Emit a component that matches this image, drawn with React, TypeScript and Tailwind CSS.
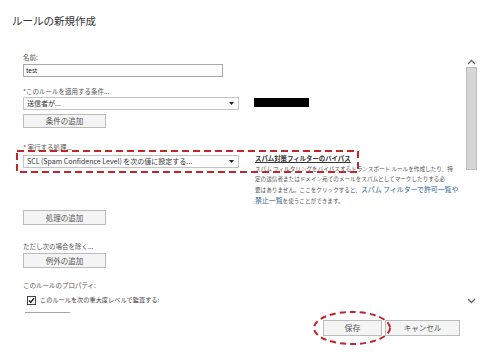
import React from "react";

function Select({ text }: { text: string }) {
  return (
    <div className="flex items-center w-[216px] h-[13px] border border-[#c4c4c4] bg-white pl-[3px] pr-[4px] shrink-0">
      <span className="flex-1 text-[7px] leading-[11px] text-[#333] whitespace-nowrap overflow-hidden">{text}</span>
      {/* arrow */}
      <svg width="5" height="3" viewBox="0 0 5 3" className="shrink-0">
        <path d="M0 0h5L2.5 3z" fill="#222" />
      </svg>
    </div>
  );
}

function Btn({ label, className = "" }: { label: string; className?: string }) {
  return (
    <button
      className={`flex items-center justify-center border border-[#bcbcbc] bg-[#f4f4f4] text-[7.5px] leading-none text-[#555] ${className}`}
    >
      {label}
    </button>
  );
}

function Label({ text, className = "" }: { text: string; className?: string }) {
  return <div className={`h-[10px] text-[6.5px] leading-[10px] text-[#555] whitespace-nowrap ${className}`}>{text}</div>;
}

function Caret({ up }: { up?: boolean }) {
  return (
    <svg width="9" height="6" viewBox="0 0 9 6">
      <path d={up ? "M1 5l3.5-3.5L8 5" : "M1 1l3.5 3.5L8 1"} fill="none" stroke="#666" strokeWidth="1.3" />
    </svg>
  );
}

export default function App() {
  return (
    <div className="relative w-[480px] h-[356px] overflow-hidden bg-white font-['Noto_Sans_CJK_JP','Noto_Sans',sans-serif] text-[#333]">
      {/* Title */}
      <div className="h-[50px] pt-[14px] pl-[12px] text-[10.5px] leading-[14px] text-[#333]">ルールの新規作成</div>

      {/* Body */}
      <div className="flex h-[270px]">
        <div className="flex-1 flex flex-col pl-[23px] pt-[2px]">
          <Label text="名前:" />
          <div className="mt-[2px] w-[200px] h-[13px] border border-[#a9a9a9] pl-[2px] text-[6.5px] leading-[11px] text-[#222]">test</div>

          <Label text="*このルールを適用する条件..." className="mt-[9px]" />
          <div className="mt-[1px] flex items-start">
            <Select text="送信者が..." />
            <div className="ml-[15px] mt-[1px] w-[55px] h-[9px] bg-black" />
          </div>
          <Btn label="条件の追加" className="mt-[4px] w-[83px] h-[14px]" />

          <Label text="* 実行する処理..." className="mt-[14px]" />
          <div className="flex items-start">
            <div className="mt-[3px]">
              <Select text="SCL (Spam Confidence Level) を次の値に設定する..." />
            </div>
            <div className="ml-[16px] mt-[2px] text-[5.6px] leading-[10px] text-[#555] whitespace-nowrap">
              <div className="underline text-[6.4px] font-bold text-[#333]">スパム対策フィルターのバイパス</div>
              <div>スパム フィルタリングをバイパスするトランスポート ルールを作成したり、特</div>
              <div>定の送信者またはドメイン宛てのメールをスパムとしてマークしたりする必</div>
              <div>
                要はありません。ここをクリックすると、
                <span className="text-[6.9px] text-[#2a5f8f]">スパム フィルターで許可一覧や</span>
              </div>
              <div>
                <span className="text-[6.9px] text-[#2a5f8f]">禁止一覧</span>を使うことができます。
              </div>
            </div>
          </div>
          <Btn label="処理の追加" className="mt-[4px] w-[83px] h-[15px]" />

          <Label text="ただし次の場合を除く..." className="mt-[16px]" />
          <Btn label="例外の追加" className="mt-[2px] w-[83px] h-[15px]" />

          <Label text="このルールのプロパティ:" className="mt-[12px]" />
          <div className="mt-[5px] ml-[4px] flex items-center h-[10px]">
            <svg width="9" height="9" viewBox="0 0 9 9">
              <rect x="0.5" y="0.5" width="8" height="8" fill="#fff" stroke="#444" />
              <path d="M2 4.5l1.8 2L7 2.2" fill="none" stroke="#111" strokeWidth="1.4" />
            </svg>
            <span className="ml-[4px] text-[6.2px] leading-[10px] text-[#444] whitespace-nowrap">
              このルールを次の重大度レベルで監査する:
            </span>
          </div>
          <div className="mt-[7px] ml-[2px] w-[45px] h-px bg-[#a5a5a5]" />
        </div>

        {/* Scrollbar */}
        <div className="w-[11px] mr-[3px] flex flex-col items-center">
          <div className="mt-[9px]">
            <Caret up />
          </div>
          <div className="mt-[2px] w-[11px] h-[103px] bg-[#d6d6d6] border border-[#bdbdbd]" />
          <div className="flex-1" />
          <div className="mb-[16px]">
            <Caret />
          </div>
        </div>
      </div>

      {/* Footer */}
      <div className="flex justify-end pr-[20px] gap-[3px]">
        <Btn label="保存" className="w-[59px] h-[16px] text-[8px]" />
        <Btn label="キャンセル" className="w-[75px] h-[16px] text-[7.5px]" />
      </div>

      {/* Annotations */}
      <svg className="absolute left-[16px] top-[150px]" width="344" height="24" viewBox="0 0 344 24">
        <rect x="1" y="1" width="341" height="21" fill="none" stroke="#c0272d" strokeWidth="2" strokeDasharray="7 4" />
      </svg>
      <svg className="absolute left-[312px] top-[310px]" width="80" height="36" viewBox="0 0 80 36">
        <ellipse cx="40" cy="18" rx="38" ry="16" fill="none" stroke="#c0272d" strokeWidth="2" strokeDasharray="6 4" />
      </svg>
    </div>
  );
}
